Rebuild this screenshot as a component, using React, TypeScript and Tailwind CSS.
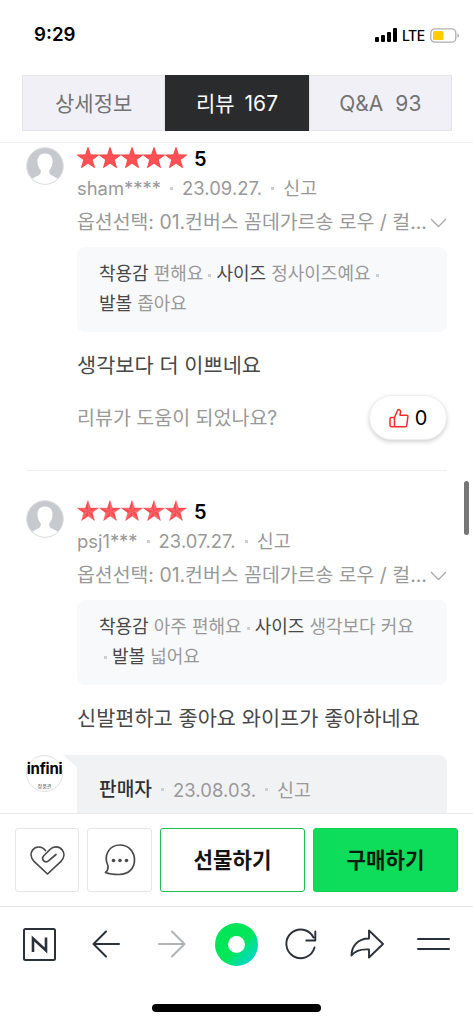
import React from "react";

const STAR = "M11 0.500 L13.500 7.900 L21.600 8 L15.200 12.800 L17.500 20.600 L11 16.100 L4.500 20.600 L6.800 12.800 L0.400 8 L8.500 7.900 Z";

const Star = ({ shade }: { shade: string }) => (
  <svg width="22" height="22" viewBox="0 0 22 22" className="shrink-0">
    <path d={STAR} fill={shade === "light" ? "#fd686c" : "#fd5156"} stroke="#f93b40" strokeWidth={shade === "light" ? 0.3 : 0.9} />
    {shade === "light" && (
      <path d="M11 0.500 V11.500 L8.500 7.900 Z M21.600 8 L11 11.500 L13.500 7.900 Z M17.500 20.600 L11 11.500 L15.200 12.800 Z M4.500 20.600 L11 11.500 V16.100 Z M0.400 8 L11 11.500 L6.800 12.800 Z" fill="#fb4a50" />
    )}
  </svg>
);

const Avatar = () => (
  <svg width="38" height="38" viewBox="0 0 38 38" className="mt-[4px] shrink-0">
    <defs>
      <clipPath id="avatar">
        <circle cx="19" cy="19" r="18.3" />
      </clipPath>
    </defs>
    <circle cx="19" cy="19" r="18.3" fill="#c6c9ce" />
    <g clipPath="url(#avatar)" fill="#fff">
      <path d="M19 6.500c-5 0-7.600 3.300-7.600 8 0 3.500 1.200 6.600 3.300 8.700.5 2.800-.4 4.500-3 5.500C8.700 30 6.500 31 5 33v6h28v-6c-1.500-2-3.700-3-6.700-4.300-2.600-1-3.500-2.700-3-5.500 2.100-2.100 3.300-5.200 3.300-8.700 0-4.700-2.600-8-7.600-8z" />
    </g>
    <circle cx="19" cy="19" r="18.3" fill="none" stroke="#dcdee1" strokeWidth="1" />
  </svg>
);

const Dot = ({ className }: { className: string }) => (
  <span className={`inline-block size-[3px] align-middle bg-[#cfcfcf] ${className}`} />
);

type ReviewProps = {
  user: string;
  date: string;
  shade: string;
  text: string;
  children: React.ReactNode;
};

const Review = ({ user, date, shade, text, children }: ReviewProps) => (
  <div className="flex pl-[26px] pr-[26px]">
    <Avatar />
    <div className="ml-[13px] min-w-0 flex-1">
      <div className="flex h-[30px] items-center">
        {[0, 1, 2, 3, 4].map((i) => (
          <Star key={i} shade={shade} />
        ))}
        <span className="ml-[7px] pt-px text-[20px] font-semibold text-black">5</span>
      </div>
      <div className="flex h-[30px] items-center whitespace-nowrap pt-px text-[18.400px] text-[#999]">
        <span>{user}</span>
        <Dot className="mx-[9px]" />
        <span className="tracking-[0.1px]">{date}</span>
        <Dot className="mx-[9px]" />
        <span>신고</span>
      </div>
      <div className="flex h-[38px] items-center justify-between whitespace-nowrap pt-[2px] text-[19.400px] text-[#999]">
        <span>옵션선택: 01.컨버스 꼼데가르송 로우 / 컬...</span>
        <svg width="17" height="10" viewBox="0 0 17 10" fill="none" stroke="#aaa" strokeWidth="1.3" className="shrink-0">
          <path d="M1 1l7.500 7.500L16 1" />
        </svg>
      </div>
      <div className="mt-[6px] h-[85px] whitespace-nowrap rounded-lg bg-[#f8f9fb] pl-[22px] pt-[12px] text-[18px] leading-[29.500px] text-[#999]">
        {children}
      </div>
      <p className="mt-[17px] h-[33px] whitespace-nowrap text-[20.800px] leading-[34px] text-[#484848]">{text}</p>
    </div>
  </div>
);

const Label = ({ children }: { children: React.ReactNode }) => <span className="text-[#484848]">{children}</span>;

const StatusBar = () => (
  <div className="flex h-[75px] shrink-0 items-start justify-between pl-[34px] pr-[14px] pt-[20px]">
    <span className="text-[18.700px] font-semibold leading-[30px] text-black">9:29</span>
    <div className="flex h-[30px] items-center">
      <svg width="22" height="14" viewBox="0 0 22 14">
        <rect x="0" y="9" width="4" height="5" rx="1" />
        <rect x="6" y="7" width="4" height="7" rx="1" />
        <rect x="12" y="4" width="4" height="10" rx="1" />
        <rect x="18" y="0" width="4" height="14" rx="1" />
      </svg>
      <span className="ml-[5px] w-[23px] text-[14px] font-medium tracking-[-0.5px] text-black">LTE</span>
      <svg width="29" height="15" viewBox="0 0 29 15" className="ml-[5px]">
        <rect x="0.800" y="0.800" width="25" height="13.400" rx="4" fill="none" stroke="#b0b0b0" strokeWidth="1.300" />
        <rect x="3" y="3" width="10.500" height="9" rx="1.500" fill="#fc0" />
        <path d="M27.500 5.500v4c1-.3 1.400-1 1.400-2s-.4-1.700-1.400-2z" fill="#a5a5a5" />
      </svg>
    </div>
  </div>
);

const Toolbar = () => (
  <div className="flex h-[117px] flex-col items-center">
    <div className="grid h-[74px] w-full grid-cols-7 items-center justify-items-center px-[7px]">
      <svg width="33" height="33" viewBox="0 0 33 33" fill="none" stroke="#2b313b">
        <rect x="1" y="1" width="31" height="31" rx="1.500" strokeWidth="2" />
        <path d="M10 24V10.500L23 22.500V9.500" strokeWidth="2.600" />
      </svg>
      <svg width="28" height="28" viewBox="0 0 28 28" fill="none" stroke="#2b313b" strokeWidth="2" strokeLinejoin="round" strokeLinecap="round" className="ml-[2px]">
        <path d="M14 1.500L1.500 14 14 26.500M1.500 14H27" />
      </svg>
      <svg width="28" height="28" viewBox="0 0 28 28" fill="none" stroke="#b1b3b5" strokeWidth="2" strokeLinejoin="round" strokeLinecap="round" className="ml-[2px]">
        <path d="M14 1.500L26.500 14 14 26.500M26.500 14H1" />
      </svg>
      <span className="flex size-[43px] items-center justify-center rounded-full bg-linear-to-br from-[#00e658] from-55% to-[#00cdea]">
        <span className="size-[17px] rounded-full bg-white" />
      </span>
      <svg width="32" height="32" viewBox="0 0 32 32" fill="none" stroke="#2b313b" strokeWidth="1.900" strokeLinecap="round" strokeLinejoin="round" className="mr-[2px]">
        <path d="M29.500 19.500A14.300 14.300 0 1 1 28.500 9.500M30.300 3.500v9H21.300" />
      </svg>
      <svg width="34" height="30" viewBox="0 0 34 30" fill="none" stroke="#2b313b" strokeWidth="1.900" strokeLinejoin="round" className="mr-[2px]">
        <path d="M19 1.500L33 15 19 28.500V20.500C11 20 5 22 1.500 26.500 1.500 18 7 9.500 19 9.500Z" />
      </svg>
      <svg width="33" height="14" viewBox="0 0 33 14" fill="none" stroke="#2b313b" strokeWidth="2" strokeLinecap="round">
        <path d="M1 2H32M1 12H32" />
      </svg>
    </div>
    <div className="mt-[23px] h-[8px] w-[169px] rounded-full bg-black" />
  </div>
);

const App: React.FC = () => {
  return (
    <div className="relative flex h-[1024px] w-[473px] flex-col overflow-hidden bg-white font-['Inter','Noto_Sans_CJK_KR',sans-serif]">
      <StatusBar />

      <div className="h-[68px] shrink-0 border-b border-[#eee] pl-[22px] pr-[21px]">
        <div className="grid h-[56px] grid-cols-3 text-[21px] text-[#737373]">
          <div className="flex items-center justify-center border border-[#e5e5e5] bg-[#f1f0f7] pt-[2px]">상세정보</div>
          <div className="flex items-center justify-center gap-[10px] bg-[#2a2b2d] pt-[2px] text-white">
            <span>리뷰</span>
            <span>167</span>
          </div>
          <div className="flex items-center justify-center gap-[12px] border border-[#e5e5e5] bg-[#f1f0f7] pt-[2px]">
            <span>Q&amp;A</span>
            <span>93</span>
          </div>
        </div>
      </div>

      <div className="h-[670px] shrink-0 overflow-hidden">
        <Review user="sham****" date="23.09.27." shade="even" text="생각보다 더 이쁘네요">
          <Label>착용감</Label> 편해요
          <Dot className="mx-[5px]" />
          <Label>사이즈</Label> 정사이즈예요
          <Dot className="mx-[5px]" />
          <br />
          <Label>발볼</Label> 좁아요
        </Review>
        <div className="ml-[77px] mr-[26px] mt-[13px] flex h-[45px] items-center justify-between text-[19.500px] text-[#999]">
          <span className="pt-[3px]">리뷰가 도움이 되었나요?</span>
          <button className="flex h-[45px] w-[78px] items-center justify-center gap-[6px] rounded-full border border-[#eee] bg-white text-[20px] text-black shadow-[0_2px_4px_rgba(0,0,0,0.18)]">
            <svg width="20" height="20" viewBox="0 0 20 20" fill="none" stroke="#ff2a2a" strokeWidth="1.500" strokeLinejoin="round">
              <path d="M5.500 9.500L9 1.500c1.800 0 2.800 1 2.500 2.800L11 7.200h6.500c1 0 1.500.6 1.400 1.500l-1.200 8.800c-.1.800-.6 1.200-1.400 1.200H2.500c-1 0-1.500-.5-1.500-1.500v-6.200c0-1 .5-1.500 1.500-1.500zM5.500 9.500v9" />
            </svg>
            <span className="pt-px">0</span>
          </button>
        </div>
        <div className="mx-[26px] mb-[25px] mt-[30px] h-px bg-[#eee]" />

        <Review user="psj1***" date="23.07.27." shade="light" text="신발편하고 좋아요 와이프가 좋아하네요">
          <Label>착용감</Label> 아주 편해요
          <Dot className="mx-[5px]" />
          <Label>사이즈</Label> 생각보다 커요
          <br />
          <Dot className="mx-[5px]" />
          <Label>발볼</Label> 넓어요
        </Review>

        <div className="mt-[20px] flex pl-[26px] pr-[26px]">
          <div className="flex size-[37px] flex-col items-center rounded-full border border-[#e2e2e2]">
            <span className="mt-[3px] text-[15px] font-bold leading-[20px] tracking-[-0.2px] text-black">infini</span>
            <span className="mt-[4px] text-[5px] leading-[6px] text-[#444]">정품관</span>
          </div>
          <svg width="14" height="14" viewBox="0 0 14 14" fill="#f1f2f4">
            <path d="M0 0H14V12Z" />
          </svg>
          <div className="flex h-[80px] flex-1 items-start rounded-tr-lg bg-[#f1f2f4] pl-[22px] pt-[20px] text-[18.400px] leading-[30px] text-[#999]">
            <span className="text-[19.200px] font-medium leading-[29px] text-[#303030]">판매자</span>
            <Dot className="mx-[9px] mt-[13px]" />
            <span className="tracking-[0.1px]">23.08.03.</span>
            <Dot className="mx-[9px] mt-[13px]" />
            <span>신고</span>
          </div>
        </div>
      </div>

      <div className="flex h-[93px] shrink-0 gap-[8px] border-t border-[#e8e8e8] px-[15px] pt-[14px]">
        <button className="flex h-[64px] w-[64px] items-center justify-center rounded-[3px] border border-[#e5e5e5]">
          <svg width="35" height="29" viewBox="0 0 35 29" fill="none" stroke="#4a4a4a" strokeWidth="1.700" strokeLinejoin="round" strokeLinecap="round">
            <path d="M15.500 4.500C12-.2 5.500 0 2.600 4 .2 7.500.8 12 4 15.300L17.500 28 31 15.300C34.300 12 34.700 7.500 32.400 4.200 29.200 0 23.500 0 20 3.500L14 9.500c-3.500 3.500.8 8.700 4.800 5.200L26 8.500" />
          </svg>
        </button>
        <button className="flex h-[64px] w-[65px] items-center justify-center rounded-[3px] border border-[#e5e5e5]">
          <svg width="32" height="32" viewBox="0 0 32 32" fill="none" stroke="#4a4a4a" strokeWidth="1.700" strokeLinejoin="round">
            <path d="M4 22C-1 11 5.500 1 16 1c8.500 0 14.500 6.500 14.500 15S24.500 30.500 15 30.500c-5 0-10-.5-13.500-2C3.500 27 4.300 25 4 22Z" />
            <g fill="#4a4a4a" stroke="none">
              <circle cx="9.500" cy="16.500" r="1.800" />
              <circle cx="16" cy="16.500" r="1.800" />
              <circle cx="22.500" cy="16.500" r="1.800" />
            </g>
          </svg>
        </button>
        <button className="h-[64px] w-[145px] rounded-[3px] border border-[#1cbf50] pt-[2px] text-[21.200px] font-bold text-[#141414]">선물하기</button>
        <button className="h-[64px] w-[145px] rounded-[3px] border border-[#12cf55] bg-[#0ddd5b] pt-[2px] text-[21.200px] font-bold text-[#0b1b10]">구매하기</button>
      </div>
      <div className="h-px shrink-0 bg-[#e3e3ea]" />
      <Toolbar />

      <div className="absolute right-[4px] top-[481px] h-[54px] w-[5px] rounded-full bg-[#777]" />
    </div>
  );
};

export default App;
